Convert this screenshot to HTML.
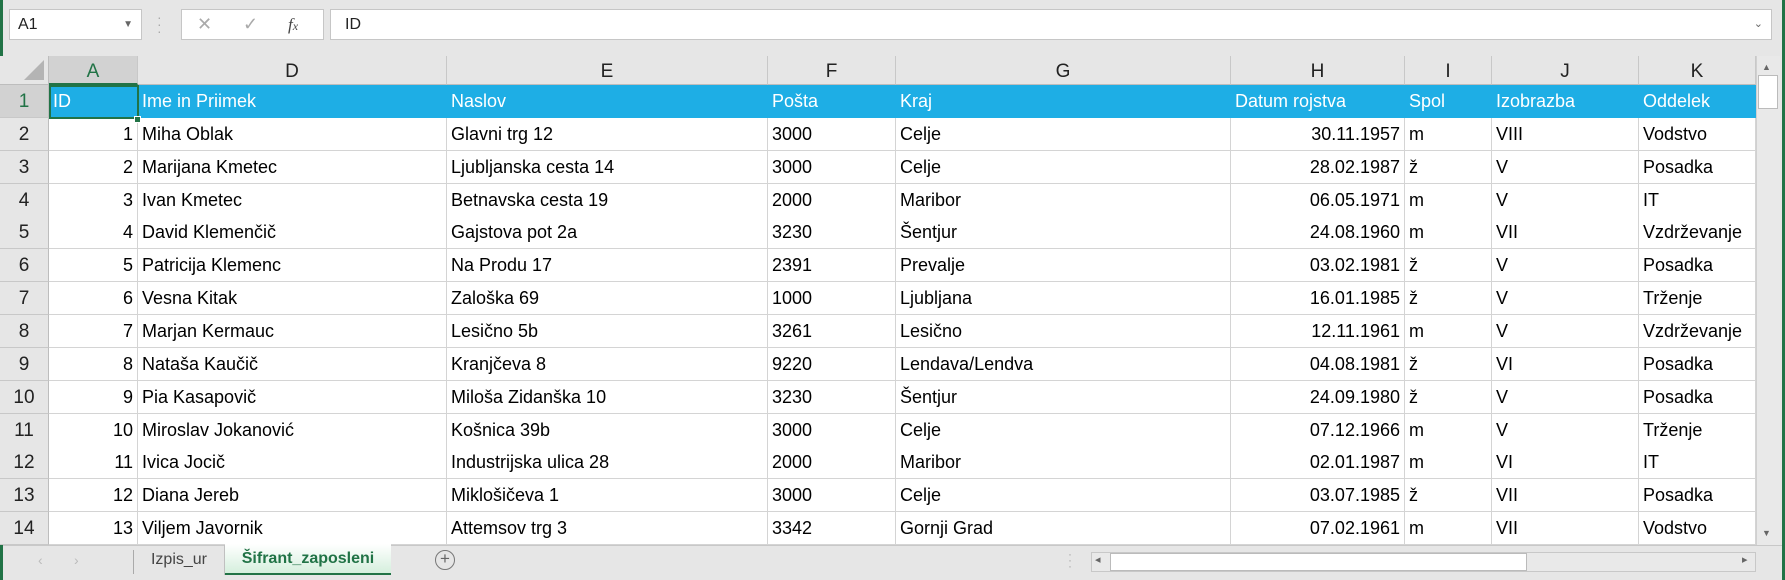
<!DOCTYPE html>
<html><head><meta charset="utf-8"><style>
*{margin:0;padding:0;box-sizing:border-box}
body{width:1785px;height:580px;overflow:hidden;background:#e6e6e6;font-family:"Liberation Sans",sans-serif;position:relative}
.abs{position:absolute}
.cell{position:absolute;height:33px;line-height:33px;font-size:18px;color:#000;white-space:nowrap;overflow:hidden;padding:0 4px;border-right:1px solid #d4d4d4;border-bottom:1px solid #d4d4d4;background:#fff}
.r{text-align:right}
.hdr .cell{background:#1eaee5;color:#fff;border-right:none;border-bottom:none}
.ch{position:absolute;top:56px;height:29px;line-height:31px;font-size:19px;color:#222;text-align:center;border-right:1px solid #c8c8c8;background:#e6e6e6;border-bottom:1px solid #bdbdbd}
.rh{position:absolute;left:0;width:49px;height:33px;line-height:33px;font-size:19px;color:#222;text-align:center;background:#e6e6e6;border-bottom:1px solid #c8c8c8;border-right:1px solid #bdbdbd}
</style></head><body>
<div class="abs" style="left:0;top:0;width:3px;height:580px;background:#217346"></div>
<div class="abs" style="right:0;top:0;width:3px;height:580px;background:#217346"></div>
<div class="abs" style="left:9px;top:9px;width:133px;height:31px;background:#fff;border:1px solid #c6c6c6;font-size:16px;line-height:29px;padding-left:8px;color:#222">A1<span style="position:absolute;right:8px;top:0;font-size:10px;color:#666">▼</span></div>
<div class="abs" style="left:157px;top:14px;color:#aaa;font-size:14px;line-height:7px">·<br>·<br>·</div>
<div class="abs" style="left:181px;top:9px;width:143px;height:31px;background:#fff;border:1px solid #c6c6c6;color:#aaa;font-size:18px;line-height:29px"><span style="position:absolute;left:15px">✕</span><span style="position:absolute;left:61px">✓</span><span style="position:absolute;left:106px;color:#444;font-family:'Liberation Serif';font-style:italic;font-size:17px">f<span style="font-size:12px">x</span></span></div>
<div class="abs" style="left:330px;top:9px;width:1442px;height:31px;background:#fff;border:1px solid #c6c6c6;font-size:16px;line-height:29px;padding-left:14px;color:#222">ID<span style="position:absolute;right:8px;top:0;font-size:11px;color:#666">⌄</span></div>

<div class="abs" style="left:0;top:56px;width:49px;height:29px;background:#e6e6e6;border-right:1px solid #bdbdbd;border-bottom:1px solid #bdbdbd"><div style="position:absolute;right:4px;bottom:4px;width:0;height:0;border-left:20px solid transparent;border-bottom:20px solid #b4b4b4"></div></div>
<div class="ch" style="left:49px;width:89px;background:#d2d2d2;color:#217346;border-bottom:2px solid #217346">A</div>
<div class="ch" style="left:138px;width:309px">D</div>
<div class="ch" style="left:447px;width:321px">E</div>
<div class="ch" style="left:768px;width:128px">F</div>
<div class="ch" style="left:896px;width:335px">G</div>
<div class="ch" style="left:1231px;width:174px">H</div>
<div class="ch" style="left:1405px;width:87px">I</div>
<div class="ch" style="left:1492px;width:147px">J</div>
<div class="ch" style="left:1639px;width:117px">K</div>

<div id="grid"></div>
<script>
(function(){
var rows=[["ID","Ime in Priimek","Naslov","Pošta","Kraj","Datum rojstva","Spol","Izobrazba","Oddelek"],
["1","Miha Oblak","Glavni trg 12","3000","Celje","30.11.1957","m","VIII","Vodstvo"],
["2","Marijana Kmetec","Ljubljanska cesta 14","3000","Celje","28.02.1987","ž","V","Posadka"],
["3","Ivan Kmetec","Betnavska cesta 19","2000","Maribor","06.05.1971","m","V","IT"],
["4","David Klemenčič","Gajstova pot 2a","3230","Šentjur","24.08.1960","m","VII","Vzdrževanje"],
["5","Patricija Klemenc","Na Produ 17","2391","Prevalje","03.02.1981","ž","V","Posadka"],
["6","Vesna Kitak","Zaloška 69","1000","Ljubljana","16.01.1985","ž","V","Trženje"],
["7","Marjan Kermauc","Lesično 5b","3261","Lesično","12.11.1961","m","V","Vzdrževanje"],
["8","Nataša Kaučič","Kranjčeva 8","9220","Lendava/Lendva","04.08.1981","ž","VI","Posadka"],
["9","Pia Kasapovič","Miloša Zidanška 10","3230","Šentjur","24.09.1980","ž","V","Posadka"],
["10","Miroslav Jokanović","Košnica 39b","3000","Celje","07.12.1966","m","V","Trženje"],
["11","Ivica Jocič","Industrijska ulica 28","2000","Maribor","02.01.1987","m","VI","IT"],
["12","Diana Jereb","Miklošičeva 1","3000","Celje","03.07.1985","ž","VII","Posadka"],
["13","Viljem Javornik","Attemsov trg 3","3342","Gornji Grad","07.02.1961","m","VII","Vodstvo"]];
var xs=[49,138,447,768,896,1231,1405,1492,1639,1756];
var h="";
for(var i=0;i<rows.length;i++){var ty=Math.round(85+i*32.86);
h+='<div class="rh" style="top:'+ty+'px;'+(i==0?'background:#d2d2d2;color:#217346':'')+'">'+(i+1)+'</div>';
h+='<div class="'+(i==0?'hdr':'')+'">';
for(var j=0;j<9;j++){var w=xs[j+1]-xs[j];var right=(i>0&&(j==0||j==5));
h+='<div class="cell'+(right?' r':'')+'" style="left:'+xs[j]+'px;top:'+ty+'px;width:'+w+'px">'+rows[i][j]+'</div>';}
h+='</div>';}
document.getElementById('grid').innerHTML=h;
})();
</script>
<div class="abs" style="left:49px;top:85px;width:90px;height:34px;border:2px solid #217346"></div>
<div class="abs" style="left:134px;top:116px;width:7px;height:7px;background:#217346;border:1px solid #fff"></div>

<div class="abs" style="left:1756px;top:56px;width:24px;height:489px;background:#e9e9e9;border-left:1px solid #d0d0d0"></div>
<div class="abs" style="left:1758px;top:75px;width:20px;height:34px;background:#fff;border:1px solid #bbb"></div>
<div class="abs" style="left:1762px;top:62px;font-size:9px;color:#666">▲</div>
<div class="abs" style="left:1762px;top:528px;font-size:9px;color:#666">▼</div>

<div class="abs" style="left:3px;top:545px;width:1779px;height:35px;background:#e6e6e6;border-top:1px solid #c8c8c8"></div>
<div class="abs" style="left:38px;top:552px;font-size:14px;color:#bbb">‹</div>
<div class="abs" style="left:74px;top:552px;font-size:14px;color:#bbb">›</div>
<div class="abs" style="left:133px;top:550px;width:1px;height:24px;background:#aaa"></div>
<div class="abs" style="left:134px;top:545px;width:91px;height:30px;font-size:16px;line-height:30px;text-align:center;color:#444;border-right:1px solid #c0c0c0">Izpis_ur</div>
<div class="abs" style="left:225px;top:544px;width:166px;height:31px;font-size:16px;font-weight:bold;line-height:30px;text-align:center;color:#217346;background:linear-gradient(#fff,#d5efdd);border-bottom:2px solid #217346">Šifrant_zaposleni</div>
<div class="abs" style="left:435px;top:550px;width:20px;height:20px;border:1.5px solid #777;border-radius:50%;font-size:17px;line-height:16px;text-align:center;color:#666">+</div>
<div class="abs" style="left:1068px;top:551px;color:#aaa;font-size:12px;line-height:6px">·<br>·<br>·</div>
<div class="abs" style="left:1091px;top:552px;width:665px;height:20px;background:#e9e9e9;border:1px solid #c8c8c8"></div>
<div class="abs" style="left:1110px;top:553px;width:417px;height:18px;background:#fff;border:1px solid #bbb"></div>
<div class="abs" style="left:1095px;top:553px;font-size:11px;color:#666">◂</div>
<div class="abs" style="left:1742px;top:553px;font-size:11px;color:#666">▸</div>
</body></html>
